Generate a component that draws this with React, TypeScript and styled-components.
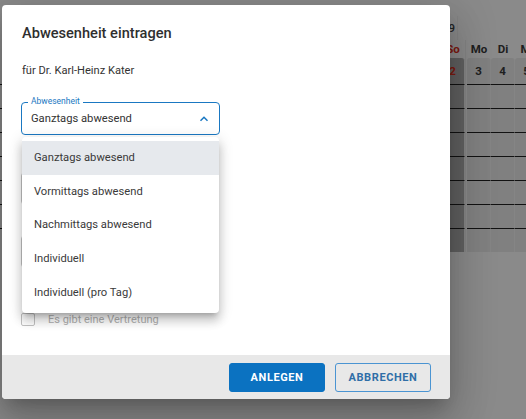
import { Fragment } from 'react'
import styled, { createGlobalStyle } from 'styled-components'

const GlobalStyle = createGlobalStyle`
  html, body {
    margin: 0;
    padding: 0;
  }
  body {
    width: 526px;
    height: 419px;
    overflow: hidden;
    background: #fff;
    font-family: Roboto, 'Liberation Sans', sans-serif;
  }
`

const Page = styled.div`
  position: relative;
  width: 526px;
  height: 419px;
  overflow: hidden;
  background: #fff;
`

/* calendar behind the modal */

const Calendar = styled.div`
  display: flex;
  flex-direction: column;
  padding-top: 16px;
`

const Row = styled.div<{ height: number }>`
  display: flex;
  height: ${({ height }) => height}px;
  box-sizing: border-box;
`

const NameCell = styled.div<{ lined?: boolean }>`
  width: 441px;
  flex: none;
  box-sizing: border-box;
  border-top: ${({ lined }) => (lined ? '1px solid #222' : '0')};
`

const WeekGap = styled.div`
  width: 2px;
  flex: none;
  background: #fff;
  border-left: 1px solid #f3f3f3;
  box-sizing: border-box;
`

const DayCell = styled.div<{
  kind: 'head' | 'num' | 'body'
  weekend?: boolean
  lined?: boolean
}>`
  width: 24px;
  flex: none;
  display: flex;
  align-items: center;
  justify-content: center;
  box-sizing: border-box;
  font-size: 11.5px;
  font-weight: 700;
  color: ${({ weekend }) => (weekend ? '#e53020' : '#3a3a3a')};
  background: ${({ kind, weekend }) =>
    kind === 'head' ? 'transparent' : weekend ? '#b2b2b2' : '#ececec'};
  border-right: ${({ kind }) => (kind === 'head' ? '0' : '1px solid #f6f6f6')};
  border-top: ${({ lined }) => (lined ? '1px solid #222' : '0')};
  border-radius: ${({ kind }) => (kind === 'num' ? '3px 3px 0 0' : '0')};
`

const MonthLabel = styled.div`
  width: 458px;
  flex: none;
  text-align: right;
  font-size: 11.5px;
  font-weight: 500;
  color: #444;
  line-height: 24px;
  border-right: 1px solid #f4f4f4;
  box-sizing: border-box;
  padding-right: 2px;
`

const Backdrop = styled.div`
  position: absolute;
  inset: 0;
  background: rgba(0, 0, 0, 0.46);
`

/* dialog */

const Dialog = styled.div`
  position: absolute;
  left: 2px;
  top: 5px;
  width: 448px;
  height: 394px;
  background: #fff;
  border-radius: 4px;
  display: flex;
  flex-direction: column;
  box-shadow: 0 11px 15px -7px rgba(0, 0, 0, 0.2),
    0 24px 38px 3px rgba(0, 0, 0, 0.14), 0 9px 46px 8px rgba(0, 0, 0, 0.12);
`

const Content = styled.div`
  position: relative;
  flex: 1;
  padding: 17px 20px 0;
`

const Title = styled.h2`
  margin: 0;
  font-size: 14.6px;
  line-height: 22px;
  font-weight: 500;
  color: #2f2f2f;
`

const Subtitle = styled.div`
  margin-top: 19px;
  font-size: 11.1px;
  line-height: 16px;
  color: #333;
`

const Field = styled.div<{ active?: boolean; top: number; narrow?: boolean }>`
  position: relative;
  margin-top: ${({ top }) => top}px;
  margin-left: -1px;
  width: ${({ narrow }) => (narrow ? 150 : 199)}px;
  height: 33px;
  box-sizing: border-box;
  border: 1px solid ${({ active }) => (active ? '#1a78c2' : '#c4c4c4')};
  border-radius: 4px;
  display: flex;
  align-items: center;
  padding: 0 9px;
  font-size: 11.2px;
  color: #333;
`

const Legend = styled.span`
  position: absolute;
  left: 6px;
  top: -7px;
  padding: 0 3px;
  background: #fff;
  font-size: 8.5px;
  line-height: 11px;
  color: #1a78c2;
`

const Value = styled.span`
  flex: 1;
`

const Chevron = styled.svg`
  width: 14px;
  height: 14px;
  margin-right: -1px;
`

const Menu = styled.ul`
  position: absolute;
  left: 20px;
  top: 132px;
  width: 197px;
  margin: 0;
  padding: 4px 0;
  list-style: none;
  background: #fff;
  border-radius: 4px;
  box-shadow: 0 5px 5px -3px rgba(0, 0, 0, 0.2),
    0 8px 10px 1px rgba(0, 0, 0, 0.14), 0 3px 14px 2px rgba(0, 0, 0, 0.12);
  z-index: 2;
`

const MenuItem = styled.li<{ selected?: boolean }>`
  height: 33.6px;
  display: flex;
  align-items: center;
  padding-left: 12px;
  font-size: 11.2px;
  color: #3a3a3a;
  background: ${({ selected }) => (selected ? '#e6e9ed' : 'transparent')};
`

const CheckRow = styled.label`
  display: flex;
  align-items: center;
  gap: 13px;
  margin-top: 45px;
  margin-left: -1px;
  font-size: 11px;
  color: #b0b0b0;
`

const Box = styled.span`
  width: 14px;
  height: 13px;
  border: 1px solid #c2c2c2;
  border-radius: 2px;
  box-sizing: border-box;
`

const Footer = styled.div`
  height: 44px;
  flex: none;
  display: flex;
  justify-content: flex-end;
  align-items: flex-start;
  gap: 10px;
  padding: 8px 19px 0 0;
  box-sizing: border-box;
  background: #e8e8e8;
  border-radius: 0 0 4px 4px;
`

const Button = styled.button<{ primary?: boolean }>`
  width: 96px;
  height: 29px;
  border-radius: 3px;
  font-family: Roboto, 'Liberation Sans', sans-serif;
  font-size: 11px;
  font-weight: 700;
  letter-spacing: 0.6px;
  text-transform: uppercase;
  cursor: pointer;
  border: 1px solid ${({ primary }) => (primary ? '#0b72c1' : '#4a94d2')};
  background: ${({ primary }) => (primary ? '#0b72c1' : 'transparent')};
  color: ${({ primary }) => (primary ? '#fff' : '#2f6ea7')};
`

const days = [
  { name: 'So', num: 2, weekend: true },
  { name: 'Mo', num: 3 },
  { name: 'Di', num: 4 },
  { name: 'Mi', num: 5 },
]

const options = [
  'Ganztags abwesend',
  'Vormittags abwesend',
  'Nachmittags abwesend',
  'Individuell',
  'Individuell (pro Tag)',
]

type Kind = 'head' | 'num' | 'body'

const DayCells = ({ kind }: { kind: Kind }) => (
  <>
    {days.map((d, i) => (
      <Fragment key={d.name}>
        {i === 1 && <WeekGap />}
        <DayCell kind={kind} weekend={d.weekend} lined={kind === 'body'}>
          {kind === 'head' ? d.name : kind === 'num' ? d.num : null}
        </DayCell>
      </Fragment>
    ))}
  </>
)

const App = () => {
  return (
    <Page>
      <GlobalStyle />
      <Calendar>
        <Row height={24}>
          <MonthLabel>Juni 2019</MonthLabel>
        </Row>
        <Row height={18}>
          <NameCell />
          <DayCells kind="head" />
        </Row>
        <Row height={26}>
          <NameCell />
          <DayCells kind="num" />
        </Row>
        {Array.from({ length: 7 }).map((_, r) => (
          <Row height={24} key={r}>
            <NameCell lined />
            <DayCells kind="body" />
          </Row>
        ))}
      </Calendar>
      <Backdrop />
      <Dialog>
        <Content>
          <Title>Abwesenheit eintragen</Title>
          <Subtitle>für Dr. Karl-Heinz Kater</Subtitle>
          <Field active top={23}>
            <Legend>Abwesenheit</Legend>
            <Value>Ganztags abwesend</Value>
            <Chevron viewBox="0 0 24 24">
              <path d="M6 15l6-6 6 6" fill="none" stroke="#1a78c2" strokeWidth="2.6" />
            </Chevron>
          </Field>
          {/* date fields, hidden under the open menu */}
          <Field narrow top={37} />
          <Field narrow top={30} />
          <CheckRow>
            <Box />
            Es gibt eine Vertretung
          </CheckRow>
          <Menu>
            {options.map((o, i) => (
              <MenuItem key={o} selected={i === 0}>
                {o}
              </MenuItem>
            ))}
          </Menu>
        </Content>
        <Footer>
          <Button primary>Anlegen</Button>
          <Button>Abbrechen</Button>
        </Footer>
      </Dialog>
    </Page>
  )
}

export default App
